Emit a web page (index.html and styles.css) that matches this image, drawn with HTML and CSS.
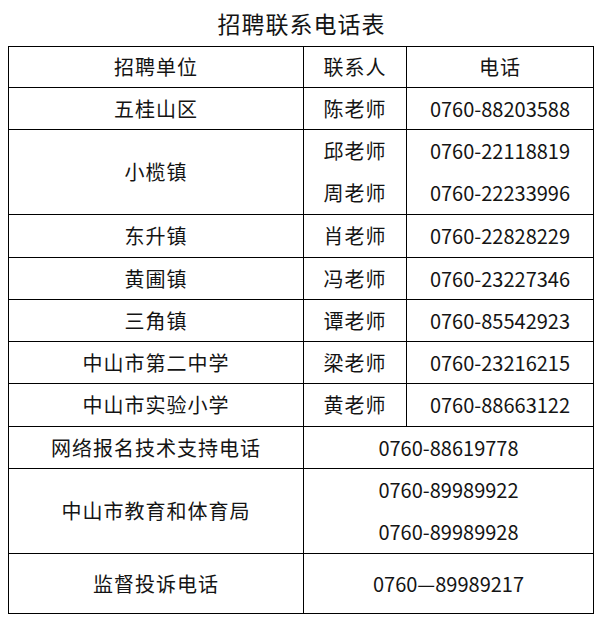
FILE: index.html
```html
<!DOCTYPE html>
<html lang="zh-CN">
<head>
<meta charset="utf-8">
<title>招聘联系电话表</title>
<link rel="stylesheet" href="styles.css">
</head>
<body>
<div class="page">
  <h1 class="title">招聘联系电话表</h1>
  <table class="contacts">
    <colgroup>
      <col class="c-unit">
      <col class="c-person">
      <col class="c-phone">
    </colgroup>
    <tr class="r-head">
      <td class="cn">招聘单位</td>
      <td class="cn">联系人</td>
      <td class="cn">电话</td>
    </tr>
    <tr class="r">
      <td class="cn">五桂山区</td>
      <td class="cn">陈老师</td>
      <td class="num">0760-88203588</td>
    </tr>
    <tr class="r-double">
      <td class="cn">小榄镇</td>
      <td class="cn">
        <div class="line">邱老师</div>
        <div class="line">周老师</div>
      </td>
      <td class="num">
        <div class="line">0760-22118819</div>
        <div class="line">0760-22233996</div>
      </td>
    </tr>
    <tr class="r r-tall">
      <td class="cn">东升镇</td>
      <td class="cn">肖老师</td>
      <td class="num">0760-22828229</td>
    </tr>
    <tr class="r">
      <td class="cn">黄圃镇</td>
      <td class="cn">冯老师</td>
      <td class="num">0760-23227346</td>
    </tr>
    <tr class="r">
      <td class="cn">三角镇</td>
      <td class="cn">谭老师</td>
      <td class="num">0760-85542923</td>
    </tr>
    <tr class="r">
      <td class="cn">中山市第二中学</td>
      <td class="cn">梁老师</td>
      <td class="num">0760-23216215</td>
    </tr>
    <tr class="r r-tall">
      <td class="cn">中山市实验小学</td>
      <td class="cn">黄老师</td>
      <td class="num">0760-88663122</td>
    </tr>
    <tr class="r">
      <td class="cn">网络报名技术支持电话</td>
      <td class="num" colspan="2">0760-88619778</td>
    </tr>
    <tr class="r-double r-double-tall">
      <td class="cn">中山市教育和体育局</td>
      <td class="num" colspan="2">
        <div class="line">0760-89989922</div>
        <div class="line">0760-89989928</div>
      </td>
    </tr>
    <tr class="r-last">
      <td class="cn">监督投诉电话</td>
      <td class="num" colspan="2">0760—89989217</td>
    </tr>
  </table>
</div>
</body>
</html>
```

FILE: styles.css
```css
html, body {
  margin: 0;
  padding: 0;
  background: #ffffff;
}

body {
  font-family: "Noto Sans CJK SC", "Noto Sans", sans-serif;
  color: #141414;
}

.page {
  width: 600px;
  padding: 0 7px 0 8px;
  box-sizing: border-box;
}

.title {
  margin: 0;
  height: 46px;
  line-height: 46px;
  text-align: center;
  font-size: 23px;
  font-weight: 400;
  letter-spacing: 1px;
  padding-left: 2px;
}

.contacts {
  width: 585px;
  border-collapse: collapse;
  table-layout: fixed;
  border: 1px solid #000;
}

.c-unit { width: 295px; }
.c-person { width: 103px; }
.c-phone { width: 187px; }

.contacts td {
  border: 1px solid #000;
  padding: 0;
  text-align: center;
  vertical-align: middle;
  white-space: nowrap;
  line-height: 24px;
}

.r-head td { height: 40px; }
.r td { height: 41px; }
.r-tall td { height: 42px; }
.r-double td { height: 83px; }
.r-double-tall td { height: 84px; }
.r-last td { height: 59px; }

.line {
  height: 42px;
  line-height: 42px;
}

.cn {
  font-size: 20px;
  letter-spacing: 1px;
  padding-left: 1px;
}

.num {
  font-size: 20px;
  letter-spacing: 0;
}
```
